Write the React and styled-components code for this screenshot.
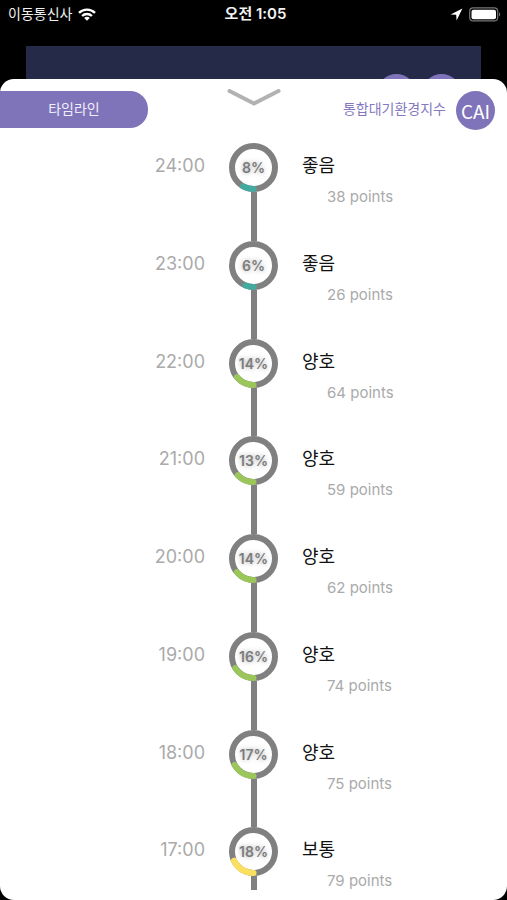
import styled, { createGlobalStyle } from "styled-components";

const GlobalStyle = createGlobalStyle`
    * {
        box-sizing: border-box;
    }

    body {
        margin: 0;
        background: #000;
        font-family: Inter, "Noto Sans CJK KR", sans-serif;
    }
`;

const Screen = styled.div`
    display: flex;
    flex-direction: column;
    height: 100vh;
    overflow: hidden;
`;

const StatusBar = styled.header`
    display: grid;
    grid-template-columns: 1fr auto 1fr;
    align-items: center;
    height: 26px;
    margin-bottom: 20px;
    padding: 0 6px 0 8px;
    color: #f2f2f2;
    font-size: 14px;
    line-height: 26px;
`;

const StatusGroup = styled.div`
    display: flex;
    align-items: center;
    justify-content: ${({ $end }) => ($end ? "flex-end" : "flex-start")};
    gap: 6px;
`;

const Clock = styled.time`
    padding-left: 2px;
    font-size: 15px;
    font-weight: 600;
    line-height: 28px;
`;

const Backdrop = styled.div`
    display: flex;
    flex: none;
    justify-content: flex-end;
    gap: 6px;
    height: 33px;
    margin: 0 26px;
    padding: 28px 20px 0 0;
    background: #242a47;
    overflow: hidden;
`;

const Badge = styled.span`
    display: flex;
    flex: none;
    align-items: center;
    justify-content: center;
    width: 39px;
    height: 39px;
    border-radius: 50%;
    background: #7f74b9;
    color: #fff;
    font-family: "Noto Sans CJK KR", sans-serif;
    font-size: 19px;
    line-height: 39px;
`;

const Sheet = styled.main`
    display: flex;
    flex: 1;
    flex-direction: column;
    min-height: 0;
    padding: 10px 0;
    border-radius: 14px;
    background: #fff;
`;

const SheetHeader = styled.div`
    display: grid;
    grid-template-columns: 1fr auto 1fr;
    align-items: start;
    padding: 2px 12px 13px 0;
`;

const Title = styled.h1`
    width: 148px;
    height: 37px;
    margin: 0;
    border-radius: 0 18px 18px 0;
    background: #7f74b9;
    color: #f0eefa;
    font-size: 14px;
    font-weight: 400;
    line-height: 35px;
    text-align: center;
`;

const CloseButton = styled.button`
    display: block;
    margin-top: -2px;
    padding: 0;
    border: 0;
    background: none;
    transform: translateX(6px);
`;

const IndexLabel = styled.div`
    display: flex;
    align-items: flex-start;
    justify-content: flex-end;
    gap: 10px;
    color: #8479bf;
    font-size: 14px;
    line-height: 35px;
    white-space: nowrap;
`;

const Scroller = styled.div`
    flex: 1;
    min-height: 0;
    overflow: hidden;
`;

const Timeline = styled.ol`
    display: grid;
    grid-auto-rows: 1fr;
    min-height: 782px;
    margin: 0;
    padding: 0;
    list-style: none;
`;

const Row = styled.li`
    display: grid;
    grid-template-columns: 1fr 49px 1fr;
    column-gap: 24px;
`;

const Hour = styled.time`
    color: #aaa;
    font-size: 18px;
    line-height: 45px;
    text-align: right;
`;

const Track = styled.div`
    display: flex;
    flex-direction: column;
    align-items: center;
`;

const Line = styled.div`
    flex: 1;
    width: 6px;
    background: #808080;
`;

const Gauge = styled.div`
    display: grid;
    place-items: center;
    height: 49px;

    > * {
        grid-area: 1 / 1;
    }
`;

const Percent = styled.span`
    color: #7c7c7c;
    font-size: 14px;
    font-weight: 600;
    text-shadow: 0 0 5px #aaa;
`;

const Grade = styled.div`
    color: #111;
    font-size: 18px;
    line-height: 45px;
`;

const Points = styled.div`
    padding-left: 25px;
    color: #aaa;
    font-size: 15px;
    line-height: 17px;
`;

const TEAL = "#43aaa0";
const GREEN = "#9bc75a";
const YELLOW = "#fbe060";

const hours = [
    { time: "24:00", percent: 8, grade: "좋음", points: 38, color: TEAL },
    { time: "23:00", percent: 6, grade: "좋음", points: 26, color: TEAL },
    { time: "22:00", percent: 14, grade: "양호", points: 64, color: GREEN },
    { time: "21:00", percent: 13, grade: "양호", points: 59, color: GREEN },
    { time: "20:00", percent: 14, grade: "양호", points: 62, color: GREEN },
    { time: "19:00", percent: 16, grade: "양호", points: 74, color: GREEN },
    { time: "18:00", percent: 17, grade: "양호", points: 75, color: GREEN },
    { time: "17:00", percent: 18, grade: "보통", points: 79, color: YELLOW },
];

function Ring({ percent, color }) {
    // The arc starts at the bottom and runs clockwise
    return (
        <svg width="49" height="49" viewBox="0 0 49 49" fill="none" strokeWidth="6">
            <circle cx="24.5" cy="24.5" r="21.5" stroke="#808080" />
            <circle
                cx="24.5"
                cy="24.5"
                r="21.5"
                stroke={color}
                strokeLinecap="round"
                pathLength="100"
                strokeDasharray={`${percent} 100`}
                transform="rotate(90 24.5 24.5)"
            />
        </svg>
    );
}

function WifiIcon() {
    return (
        <svg width="18" height="13" viewBox="0 0 18 13" fill="none" stroke="#fff" strokeWidth="2.4">
            <path d="M1 4.9C5.4.5 12.6.5 17 4.9" />
            <path d="M4.1 8C6.8 5.3 11.2 5.3 13.9 8" />
            <path d="M9 12.7 6.2 9.9C7.8 8.5 10.2 8.5 11.8 9.9Z" fill="#fff" stroke="none" />
        </svg>
    );
}

function LocationIcon() {
    return (
        <svg width="13" height="13" viewBox="0 0 13 13">
            <path d="M12.4.6.6 6.5 6.2 6.8 6.6 12.4Z" fill="#fff" />
        </svg>
    );
}

function BatteryIcon() {
    return (
        <svg width="32" height="15" viewBox="0 0 32 15">
            <rect x="0.7" y="0.9" width="28" height="13" rx="3.5" fill="none" stroke="#777" strokeWidth="1.2" />
            <rect x="2.5" y="2.7" width="24.5" height="9.5" rx="2" fill="#fff" />
            <path d="M30 5.2C31.6 5.9 31.6 8.9 30 9.6Z" fill="#777" />
        </svg>
    );
}

export default function App() {
    return (
        <Screen>
            <GlobalStyle />
            <StatusBar>
                <StatusGroup>
                    이동통신사
                    <WifiIcon />
                </StatusGroup>
                <Clock>오전 1:05</Clock>
                <StatusGroup $end>
                    <LocationIcon />
                    <BatteryIcon />
                </StatusGroup>
            </StatusBar>
            <Backdrop>
                <Badge />
                <Badge />
            </Backdrop>
            <Sheet>
                <SheetHeader>
                    <Title>타임라인</Title>
                    <CloseButton type="button" aria-label="닫기">
                        <svg width="54" height="18" viewBox="0 0 54 18" fill="none">
                            <path d="M2.5 2 27 14.5 51.5 2" stroke="#b2b2b2" strokeWidth="4" strokeLinecap="round" />
                        </svg>
                    </CloseButton>
                    <IndexLabel>
                        통합대기환경지수
                        <Badge>CAI</Badge>
                    </IndexLabel>
                </SheetHeader>
                <Scroller>
                    <Timeline>
                        {hours.map((hour) => (
                            <Row key={hour.time}>
                                <Hour>{hour.time}</Hour>
                                <Track>
                                    <Gauge>
                                        <Ring percent={hour.percent} color={hour.color} />
                                        <Percent>{hour.percent}%</Percent>
                                    </Gauge>
                                    <Line />
                                </Track>
                                <div>
                                    <Grade>{hour.grade}</Grade>
                                    <Points>{hour.points} points</Points>
                                </div>
                            </Row>
                        ))}
                    </Timeline>
                </Scroller>
            </Sheet>
        </Screen>
    );
}
